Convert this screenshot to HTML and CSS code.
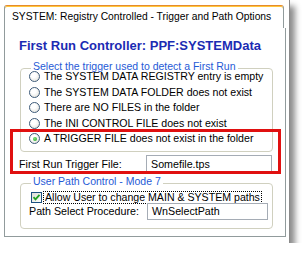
FILE: index.html
```html
<!DOCTYPE html>
<html>
<head>
<meta charset="utf-8">
<link rel="stylesheet" href="styles.css">
</head>
<body>
<div class="window">
  <div class="tab">SYSTEM: Registry Controlled - Trigger and Path Options</div>
  <div class="panel">
    <div class="title">First Run Controller: PPF:SYSTEMData</div>
    <div class="group g1">
      <div class="caption">Select the trigger used to detect a First Run</div>
      <div class="radio"><span class="rb"></span><span>The SYSTEM DATA REGISTRY entry is empty</span></div>
      <div class="radio"><span class="rb"></span><span>The SYSTEM DATA FOLDER does not exist</span></div>
      <div class="radio"><span class="rb"></span><span>There are NO FILES in the folder</span></div>
      <div class="radio"><span class="rb"></span><span>The INI CONTROL FILE does not exist</span></div>
      <div class="radio"><span class="rb on"></span><span>A TRIGGER FILE does not exist in the folder</span></div>
    </div>
    <div class="field trig"><span class="lbl">First Run Trigger File:</span><span class="box">Somefile.tps</span></div>
    <div class="group g2">
      <div class="caption">User Path Control - Mode 7</div>
      <div class="check"><span class="cb"><svg width="9" height="9" viewBox="0 0 9 9"><path d="M1.5 4.2 L3.5 6.3 L7.5 1.8" fill="none" stroke="#21a121" stroke-width="1.8"/></svg></span><span class="focus">Allow User to change MAIN &amp; SYSTEM paths</span></div>
      <div class="field path"><span class="lbl">Path Select Procedure:</span><span class="box">WnSelectPath</span></div>
    </div>
  </div>
  <div class="highlight"></div>
</div>
</body>
</html>
```
FILE: styles.css
```css
html, body {
  margin: 0;
  padding: 0;
  background: #fff;
}
body {
  font-family: "Liberation Sans", Arial, sans-serif;
  color: #000;
}
.window {
  position: relative;
  width: 290px;
  height: 243px;
  box-sizing: border-box;
  border-right: 1px solid #8a8a8a;
  padding: 5px 0 0 4px;
  background: #fff;
  box-shadow: 5px 6px 6px rgba(0, 0, 0, 0.45);
}
.tab {
  width: 280px;
  height: 23px;
  box-sizing: border-box;
  border: 1px solid #919b9c;
  border-top: 1px solid #e68b2c;
  border-bottom: none;
  box-shadow: inset 0 1px 0 #ffc73c;
  border-radius: 3px 3px 0 0;
  font-size: 10.3px;
  line-height: 21px;
  padding-left: 7px;
  white-space: nowrap;
}
.panel {
  width: 282px;
  height: 209px;
  box-sizing: border-box;
  border: 1px solid #919b9c;
  border-top: none;
  padding: 11px 0 0 14px;
}
.title {
  font-size: 13px;
  font-weight: bold;
  line-height: 14px;
  color: #1b2bb3;
  white-space: nowrap;
}
.group {
  width: 253px;
  box-sizing: border-box;
  border: 1px solid #d0d0bf;
  border-radius: 4px;
  margin-left: 1px;
  padding-left: 8px;
}
.g1 {
  margin-top: 15px;
  padding-bottom: 4px;
}
.caption {
  position: relative;
  display: block;
  width: max-content;
  background: #fff;
  color: #1f5ad6;
  font-size: 10.5px;
  line-height: 9px;
  height: 9px;
  padding: 0 2px;
  margin: -7px 0 -2px 2px;
  white-space: nowrap;
}
.radio {
  height: 15.5px;
  display: flex;
  align-items: center;
  font-size: 10.6px;
  line-height: 9px;
  white-space: nowrap;
}
.rb {
  position: relative;
  width: 11px;
  height: 11px;
  box-sizing: border-box;
  border: 1px solid #3e5b7a;
  border-radius: 50%;
  background: radial-gradient(circle at 40% 35%, #ffffff 30%, #dcdcd4 100%);
  margin-right: 4px;
  flex: none;
}
.rb.on::after {
  content: "";
  position: absolute;
  left: 2.5px;
  top: 2.5px;
  width: 4px;
  height: 4px;
  border-radius: 50%;
  background: radial-gradient(circle at 40% 35%, #7fe07f, #21a121);
}
.field {
  display: flex;
  align-items: center;
  font-size: 10.7px;
  white-space: nowrap;
}
.lbl {
  flex: none;
}
.box {
  box-sizing: border-box;
  border: 1px solid #a5acb5;
  background: #fff;
  display: flex;
  align-items: center;
  padding-left: 4px;
  flex: none;
}
.trig {
  margin-top: 3px;
  height: 18px;
}
.trig .lbl {
  width: 127px;
}
.trig .box {
  width: 126px;
  height: 18px;
}
.g2 {
  margin-top: 10.5px;
  padding-bottom: 8px;
}
.check {
  display: flex;
  align-items: center;
  height: 11px;
  margin-top: 7.5px;
  font-size: 10.6px;
  white-space: nowrap;
}
.cb {
  width: 11px;
  height: 11px;
  box-sizing: border-box;
  border: 1px solid #1c5180;
  background: linear-gradient(135deg, #dcdcd4, #ffffff);
  margin-left: 2px;
  margin-right: 1px;
  display: flex;
  align-items: center;
  justify-content: center;
  flex: none;
}
.focus {
  border: 1px dotted #000;
  line-height: 11px;
  padding: 0 1px;
}
.path {
  height: 17px;
}
.path .lbl {
  width: 118px;
}
.path .box {
  width: 121px;
  height: 17px;
}
.highlight {
  position: absolute;
  left: 10px;
  top: 129px;
  width: 271px;
  height: 45px;
  box-sizing: border-box;
  border: 3px solid #e01010;
}
```
